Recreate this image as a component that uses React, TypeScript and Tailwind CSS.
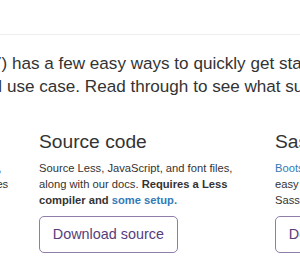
import React from "react";

const font = { fontFamily: '"Liberation Sans", Arial, sans-serif' };

function Col({ title, children, button }: { title: string; children: React.ReactNode; button: string }) {
  return (
    <div className="w-[212px] shrink-0">
      <h3 className="text-[19.2px] leading-[21.1px] font-medium text-[#333] mb-[8px]">{title}</h3>
      <p className="text-[11.2px] leading-[16px] text-[#333] mb-[8px]">{children}</p>
      <button className="border border-[#8f7eaa] rounded-[5px] text-[#563d7c] text-[14.4px] leading-[19.2px] py-[8px] px-[12.8px] bg-white whitespace-nowrap">
        {button}
      </button>
    </div>
  );
}

export default function App() {
  return (
    <div className="w-[300px] h-[265px] overflow-hidden bg-white" style={font}>
      <div className="h-[35px] border-b border-[#eee]" />
      <div className="ml-[-199px] w-[936px] mt-[16.7px] text-[17.1px] leading-[23.5px] text-[#333] font-light">
        <div className="whitespace-nowrap">
          Bootstrap (currently v3.3.7) has a few easy ways to quickly get started, each one appealing
        </div>
        <div className="whitespace-nowrap">
          to a different skill level and use case. Read through to see what suits your particular needs.
        </div>
      </div>
      <div className="ml-[-197px] mt-[32.4px] flex gap-[24px]">
        <Col title="Bootstrap" button="Download Bootstrap">
          Compiled and minified CSS, JavaScript, and fonts. No docs or original source files are included.
        </Col>
        <Col title="Source code" button="Download source">
          Source Less, JavaScript, and font files, along with our docs.{" "}
          <strong>
            Requires a Less compiler and <a className="text-[#337ab7]">some setup.</a>
          </strong>
        </Col>
        <Col title="Sass" button="Download Sass">
          <a className="text-[#337ab7]">Bootstrap ported from Less to Sass</a> for easy inclusion in Rails, Compass, or{" "}
          <span className="whitespace-nowrap">Sass-only</span> projects.
        </Col>
      </div>
    </div>
  );
}
